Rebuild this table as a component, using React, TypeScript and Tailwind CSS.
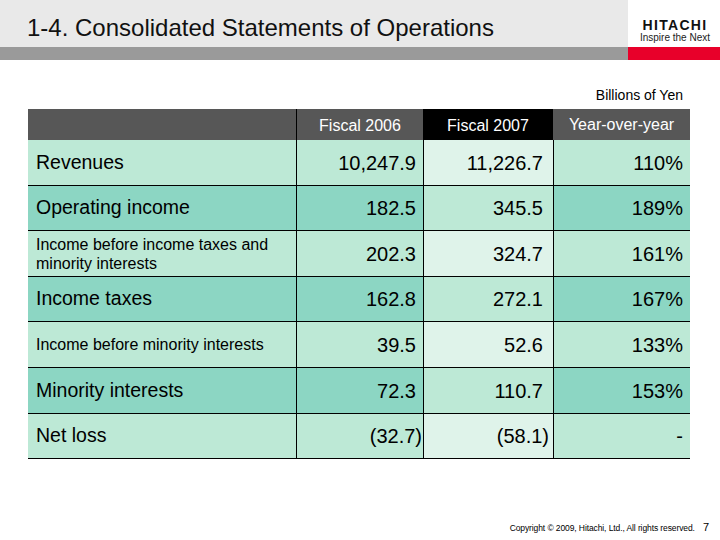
// Consolidated Statements of Operations slide

type Row = {
  label: string;
  small?: boolean;
  dark: boolean;
  h: string;
  fy06: string;
  fy07: string;
  yoy: string;
};

const rows: Row[] = [
  { label: "Revenues", dark: false, h: "h-[46px]", fy06: "10,247.9", fy07: "11,226.7", yoy: "110%" },
  { label: "Operating income", dark: true, h: "h-[45px]", fy06: "182.5", fy07: "345.5", yoy: "189%" },
  { label: "Income before income taxes and minority interests", small: true, dark: false, h: "h-[46px]", fy06: "202.3", fy07: "324.7", yoy: "161%" },
  { label: "Income taxes", dark: true, h: "h-[45px]", fy06: "162.8", fy07: "272.1", yoy: "167%" },
  { label: "Income before minority interests", small: true, dark: false, h: "h-[46px]", fy06: "39.5", fy07: "52.6", yoy: "133%" },
  { label: "Minority interests", dark: true, h: "h-[46px]", fy06: "72.3", fy07: "110.7", yoy: "153%" },
  { label: "Net loss", dark: false, h: "h-[45px]", fy06: "(32.7)", fy07: "(58.1)", yoy: "-" },
];

// negatives in accounting style: the closing paren hangs past the digits
function Num({ v }: { v: string }) {
  if (v.startsWith("(")) {
    return (
      <span>
        {v.slice(0, -1)}
        <span className="-mr-[6px]">)</span>
      </span>
    );
  }
  return <span>{v}</span>;
}

export default function App() {
  return (
    <div className="w-[720px] h-[540px] bg-white flex flex-col font-['Liberation_Sans',Arial,sans-serif] text-black">
      {/* ===== TITLE BAR ===== */}
      <div className="flex h-[60px]">
        <div className="flex-1 flex flex-col">
          <div className="h-[47px] bg-[#e9e9e9] pl-[27px] pt-[14px] text-[24px] leading-[28px] text-[#111]">
            1-4. Consolidated Statements of Operations
          </div>
          <div className="h-[13px] bg-[#9a9a9a]" />
        </div>
        <div className="w-[92px] flex flex-col">
          <div className="h-[47px] bg-white flex flex-col items-center pt-[19px] pl-[2px]">
            <div className="text-[14px] leading-[13px] font-bold tracking-[1.3px] text-[#111]">HITACHI</div>
            <div className="text-[10px] leading-[12px] text-[#222]">Inspire the Next</div>
          </div>
          <div className="h-[13px] bg-[#e8002a]" />
        </div>
      </div>

      <div className="mt-[27px] pr-[37px] text-right text-[14px] leading-[16px]">Billions of Yen</div>

      {/* ===== TABLE ===== */}
      <div className="ml-[28px] mt-[6px] w-[662px]">
        <div className="flex h-[31px] bg-[#575757] text-white text-[16px]">
          <div className="w-[268px]" />
          <div className="w-[127px] border-l border-black flex items-center justify-center pt-[3px]">Fiscal 2006</div>
          <div className="w-[130px] bg-black flex items-center justify-center pt-[3px]">Fiscal 2007</div>
          <div className="w-[137px] flex items-center justify-center">Year-over-year</div>
        </div>

        {rows.map((r) => {
          const bg = r.dark ? "bg-[#8cd6c3]" : "bg-[#bde9d6]";
          const bg07 = r.dark ? "bg-[#bde9d6]" : "bg-[#dff3ea]";
          return (
            <div key={r.label} className={`flex border-b border-black ${r.h} ${bg}`}>
              <div
                className={
                  r.small
                    ? "w-[268px] pl-[8px] pr-[4px] flex items-center text-[16px] leading-[19px]"
                    : "w-[268px] pl-[8px] flex items-center text-[19.5px]"
                }
              >
                {r.label}
              </div>
              <div className="w-[127px] border-l border-black flex items-center justify-end pr-[7px] text-[20px]">
                <Num v={r.fy06} />
              </div>
              <div className={`w-[130px] border-l border-black flex items-center justify-end pr-[10px] text-[20px] ${bg07}`}>
                <Num v={r.fy07} />
              </div>
              <div className="w-[137px] border-l border-black flex items-center justify-end pr-[7px] text-[20px]">
                {r.yoy}
              </div>
            </div>
          );
        })}
      </div>

      {/* ===== FOOTER ===== */}
      <div className="mt-auto mb-[7px] pr-[11px] flex justify-end items-end gap-[8px]">
        <span className="text-[8.5px] leading-[10px] tracking-[-0.1px]">Copyright © 2009, Hitachi, Ltd., All rights reserved.</span>
        <span className="text-[11px] leading-[12px]">7</span>
      </div>
    </div>
  );
}
